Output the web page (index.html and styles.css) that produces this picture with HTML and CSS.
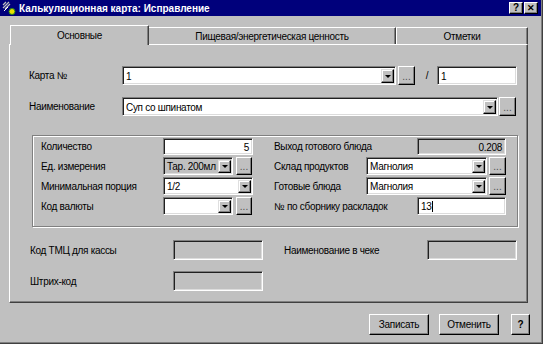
FILE: index.html
```html
<!DOCTYPE html>
<html lang="ru">
<head>
<meta charset="utf-8">
<title>Калькуляционная карта</title>
<link rel="stylesheet" href="styles.css">
</head>
<body>
<div class="window">
  <div class="titlebar">
    <svg class="title-icon" width="14" height="14" viewBox="0 0 14 14">
      <path d="M1 4 L4 1 M1 7 L7 1 M3 8 L8 3" stroke="#c0c0c0" stroke-width="1.2" fill="none"/>
      <path d="M2 10 L6 6" stroke="#ffffff" stroke-width="1" fill="none"/>
      <circle cx="10" cy="10.5" r="3" fill="#e8e000" stroke="#208020" stroke-width="1"/>
    </svg>
    <span class="title-text">Калькуляционная карта: Исправление</span>
    <span class="tb-btn">?</span>
    <span class="tb-btn tb-close">✕</span>
  </div>

  <div class="tabs">
    <div class="tab tab-active">Основные</div>
    <div class="tab tab-2">Пищевая/энергетическая ценность</div>
    <div class="tab tab-3">Отметки</div>
  </div>

  <div class="panel">
    <div class="row row-karta">
      <span class="lbl lbl-top">Карта №</span>
      <div class="field combo w-274"><span class="val">1</span><span class="drop"><i></i></span></div>
      <span class="dots">...</span>
      <span class="slash">/</span>
      <div class="field w-80"><span class="val">1</span></div>
    </div>
    <div class="row row-name">
      <span class="lbl lbl-top">Наименование</span>
      <div class="field combo w-376"><span class="val">Суп со шпинатом</span><span class="drop"><i></i></span></div>
      <span class="dots dots-1">...</span>
    </div>

    <div class="group">
      <div class="col col-left">
        <div class="grow r1">
          <span class="lbl w-122">Количество</span>
          <div class="field w-90"><span class="val num">5</span></div>
        </div>
        <div class="grow r2">
          <span class="lbl w-122">Ед. измерения</span>
          <div class="field combo gray w-70"><span class="val">Тар. 200мл</span><span class="drop"><i></i></span></div>
          <span class="dots dots-3">...</span>
        </div>
        <div class="grow r3">
          <span class="lbl w-122">Минимальная порция</span>
          <div class="field combo w-90"><span class="val">1/2</span><span class="drop"><i></i></span></div>
        </div>
        <div class="grow r4">
          <span class="lbl w-122">Код валюты</span>
          <div class="field combo w-70"><span class="val"></span><span class="drop"><i></i></span></div>
          <span class="dots dots-3">...</span>
        </div>
      </div>
      <div class="col col-right">
        <div class="grow r1">
          <span class="lbl w-143">Выход готового блюда</span>
          <div class="field gray w-89"><span class="val num">0.208</span></div>
        </div>
        <div class="grow r2">
          <span class="lbl w-92">Склад продуктов</span>
          <div class="field combo w-121"><span class="val">Магнолия</span><span class="drop"><i></i></span></div>
          <span class="dots">...</span>
        </div>
        <div class="grow r3">
          <span class="lbl w-92">Готовые блюда</span>
          <div class="field combo w-121"><span class="val">Магнолия</span><span class="drop"><i></i></span></div>
          <span class="dots">...</span>
        </div>
        <div class="grow r4">
          <span class="lbl w-143">№ по сборнику раскладок</span>
          <div class="field w-89"><span class="val">13<span class="caret"></span></span></div>
        </div>
      </div>
    </div>

    <div class="row row-bottom1">
      <span class="lbl w-143 ind">Код ТМЦ для кассы</span>
      <div class="field gray w-90 h-20"></div>
      <span class="lbl w-143 ind-r">Наименование в чеке</span>
      <div class="field gray w-90 h-20"></div>
    </div>
    <div class="row row-bottom2">
      <span class="lbl w-143 ind">Штрих-код</span>
      <div class="field gray w-90 h-20"></div>
    </div>
  </div>

  <div class="buttons">
    <span class="btn btn-save">Записать</span>
    <span class="btn btn-cancel">Отменить</span>
    <span class="btn btn-help">?</span>
  </div>
</div>
</body>
</html>
```

FILE: styles.css
```css
* { box-sizing: border-box; }

body {
  margin: 0;
  font-family: "Liberation Sans", Arial, sans-serif;
  font-size: 10px;
  letter-spacing: -0.3px;
  color: #000;
  background: #c0c0c0;
}

.window {
  width: 543px;
  height: 344px;
  background: #c0c0c0;
  border-right: 1px solid #404040;
  border-bottom: 1px solid #404040;
  box-shadow: inset -1px -1px 0 #808080;
}

/* title bar */
.titlebar {
  width: 541px;
  height: 16px;
  background: #00007b;
  color: #fff;
  display: flex;
  align-items: center;
  padding-left: 2px;
  padding-right: 3px;
}
.title-icon { flex: none; margin-right: 3px; }
.title-text {
  flex: 1;
  font-weight: bold;
  font-size: 10px;
  letter-spacing: 0;
}
.tb-btn {
  width: 14px;
  height: 12px;
  background: #c0c0c0;
  color: #000;
  font-weight: bold;
  font-size: 10px;
  line-height: 10px;
  text-align: center;
  letter-spacing: 0;
  border-top: 1px solid #fff;
  border-left: 1px solid #fff;
  border-right: 1px solid #000;
  border-bottom: 1px solid #000;
  box-shadow: inset -1px -1px 0 #808080;
}
.tb-close { margin-left: 1px; font-size: 9px; }

/* tabs */
.tabs {
  height: 28px;
  display: flex;
  align-items: flex-end;
  padding-left: 9px;
}
.tab {
  height: 17px;
  background: #c0c0c0;
  border-top: 1px solid #fff;
  border-left: 1px solid #fff;
  border-right: 1px solid #404040;
  box-shadow: inset -1px 0 0 #808080;
  display: flex;
  align-items: center;
  justify-content: center;
  padding-top: 1px;
}
.tab-active {
  position: relative;
  z-index: 1;
  margin-left: 1px;
  width: 139px;
  height: 20px;
  margin-bottom: -1px;
  padding-bottom: 2px;
}
.tab-2 { width: 247px; border-left: none; }
.tab-3 { width: 132px; }

/* panel */
.panel {
  margin-left: 9px;
  width: 519px;
  height: 259px;
  border-top: 1px solid #fff;
  border-left: 1px solid #fff;
  border-right: 1px solid #404040;
  border-bottom: 1px solid #404040;
  box-shadow: inset -1px -1px 0 #808080;
  padding: 21px 0 0 17px;
}

.row {
  display: flex;
  align-items: center;
  height: 19px;
}
.row-name { margin-top: 12px; }

.lbl { flex: none; white-space: nowrap; }
.lbl-top { width: 95px; padding-left: 2px; }

.field {
  flex: none;
  position: relative;
  height: 100%;
  background: #fff;
  border-top: 1px solid #808080;
  border-left: 1px solid #808080;
  border-right: 1px solid #fff;
  border-bottom: 1px solid #fff;
  box-shadow: inset 1px 1px 0 #202020, inset -1px -1px 0 #dcdcdc;
  display: flex;
  align-items: center;
  padding: 1px 2px 0 3px;
  overflow: hidden;
}
.field.gray { background: #c0c0c0; }
.val { flex: 1; white-space: nowrap; }
.val.num { text-align: right; padding-right: 1px; }
.caret {
  display: inline-block;
  width: 1px;
  height: 11px;
  background: #000;
  vertical-align: -2px;
}

.combo { padding-right: 1px; }
.drop {
  flex: none;
  align-self: stretch;
  width: 13px;
  margin: 1px 0 1px 0;
  background: #c0c0c0;
  border-top: 1px solid #dfdfdf;
  border-left: 1px solid #dfdfdf;
  border-right: 1px solid #000;
  border-bottom: 1px solid #000;
  box-shadow: inset -1px -1px 0 #808080, inset 1px 1px 0 #fff;
  display: flex;
  align-items: center;
  justify-content: center;
}
.drop i {
  display: block;
  width: 0;
  height: 0;
  border-left: 3px solid transparent;
  border-right: 3px solid transparent;
  border-top: 3px solid #000;
}

.dots {
  flex: none;
  width: 17px;
  height: 100%;
  margin-left: 2px;
  background: #c0c0c0;
  border-top: 1px solid #fff;
  border-left: 1px solid #fff;
  border-right: 1px solid #000;
  border-bottom: 1px solid #000;
  box-shadow: inset -1px -1px 0 #808080;
  color: #505050;
  font-size: 10px;
  letter-spacing: 0;
  display: flex;
  align-items: flex-end;
  justify-content: center;
  line-height: 10px;
  padding-bottom: 2px;
}
.dots-1 { margin-left: 1px; }
.dots-3 { margin-left: 3px; width: 16px; }

.slash { flex: none; width: 22px; text-align: center; padding-left: 2px; }

.w-274 { width: 274px; }
.w-80 { width: 80px; }
.w-376 { width: 376px; }
.w-122 { width: 122px; }
.w-90 { width: 90px; }
.w-89 { width: 89px; }
.w-70 { width: 70px; }
.w-92 { width: 92px; }
.w-121 { width: 121px; }
.w-143 { width: 143px; }
.h-20 { height: 20px; }

/* group box */
.group {
  margin-top: 19px;
  margin-left: 5px;
  width: 486px;
  height: 92px;
  border: 1px solid #808080;
  box-shadow: 1px 1px 0 #fff, inset 1px 1px 0 #fff;
  display: flex;
  padding: 2px 0 0 8px;
}
.col { display: flex; flex-direction: column; }
.col-left { width: 212px; }
.col-right { width: 232px; margin-left: 21px; }
.grow {
  display: flex;
  align-items: center;
  height: 18px;
  margin-bottom: 2px;
}
.grow.r1 { height: 17px; }

/* bottom rows */
.row-bottom1 { margin-top: 13px; height: 20px; }
.row-bottom2 { margin-top: 11px; height: 20px; }
.ind { width: 146px; padding-left: 3px; }
.ind-r { margin-left: 21px; width: 143px; }

/* buttons */
.buttons {
  margin-top: 11px;
  display: flex;
  padding-left: 369px;
  height: 21px;
}
.btn {
  height: 21px;
  background: #c0c0c0;
  border-top: 1px solid #fff;
  border-left: 1px solid #fff;
  border-right: 1px solid #000;
  border-bottom: 1px solid #000;
  box-shadow: inset -1px -1px 0 #808080;
  display: flex;
  align-items: center;
  justify-content: center;
}
.btn-save { width: 60px; }
.btn-cancel { width: 60px; margin-left: 10px; }
.btn-help { width: 19px; margin-left: 12px; font-weight: bold; }
```
